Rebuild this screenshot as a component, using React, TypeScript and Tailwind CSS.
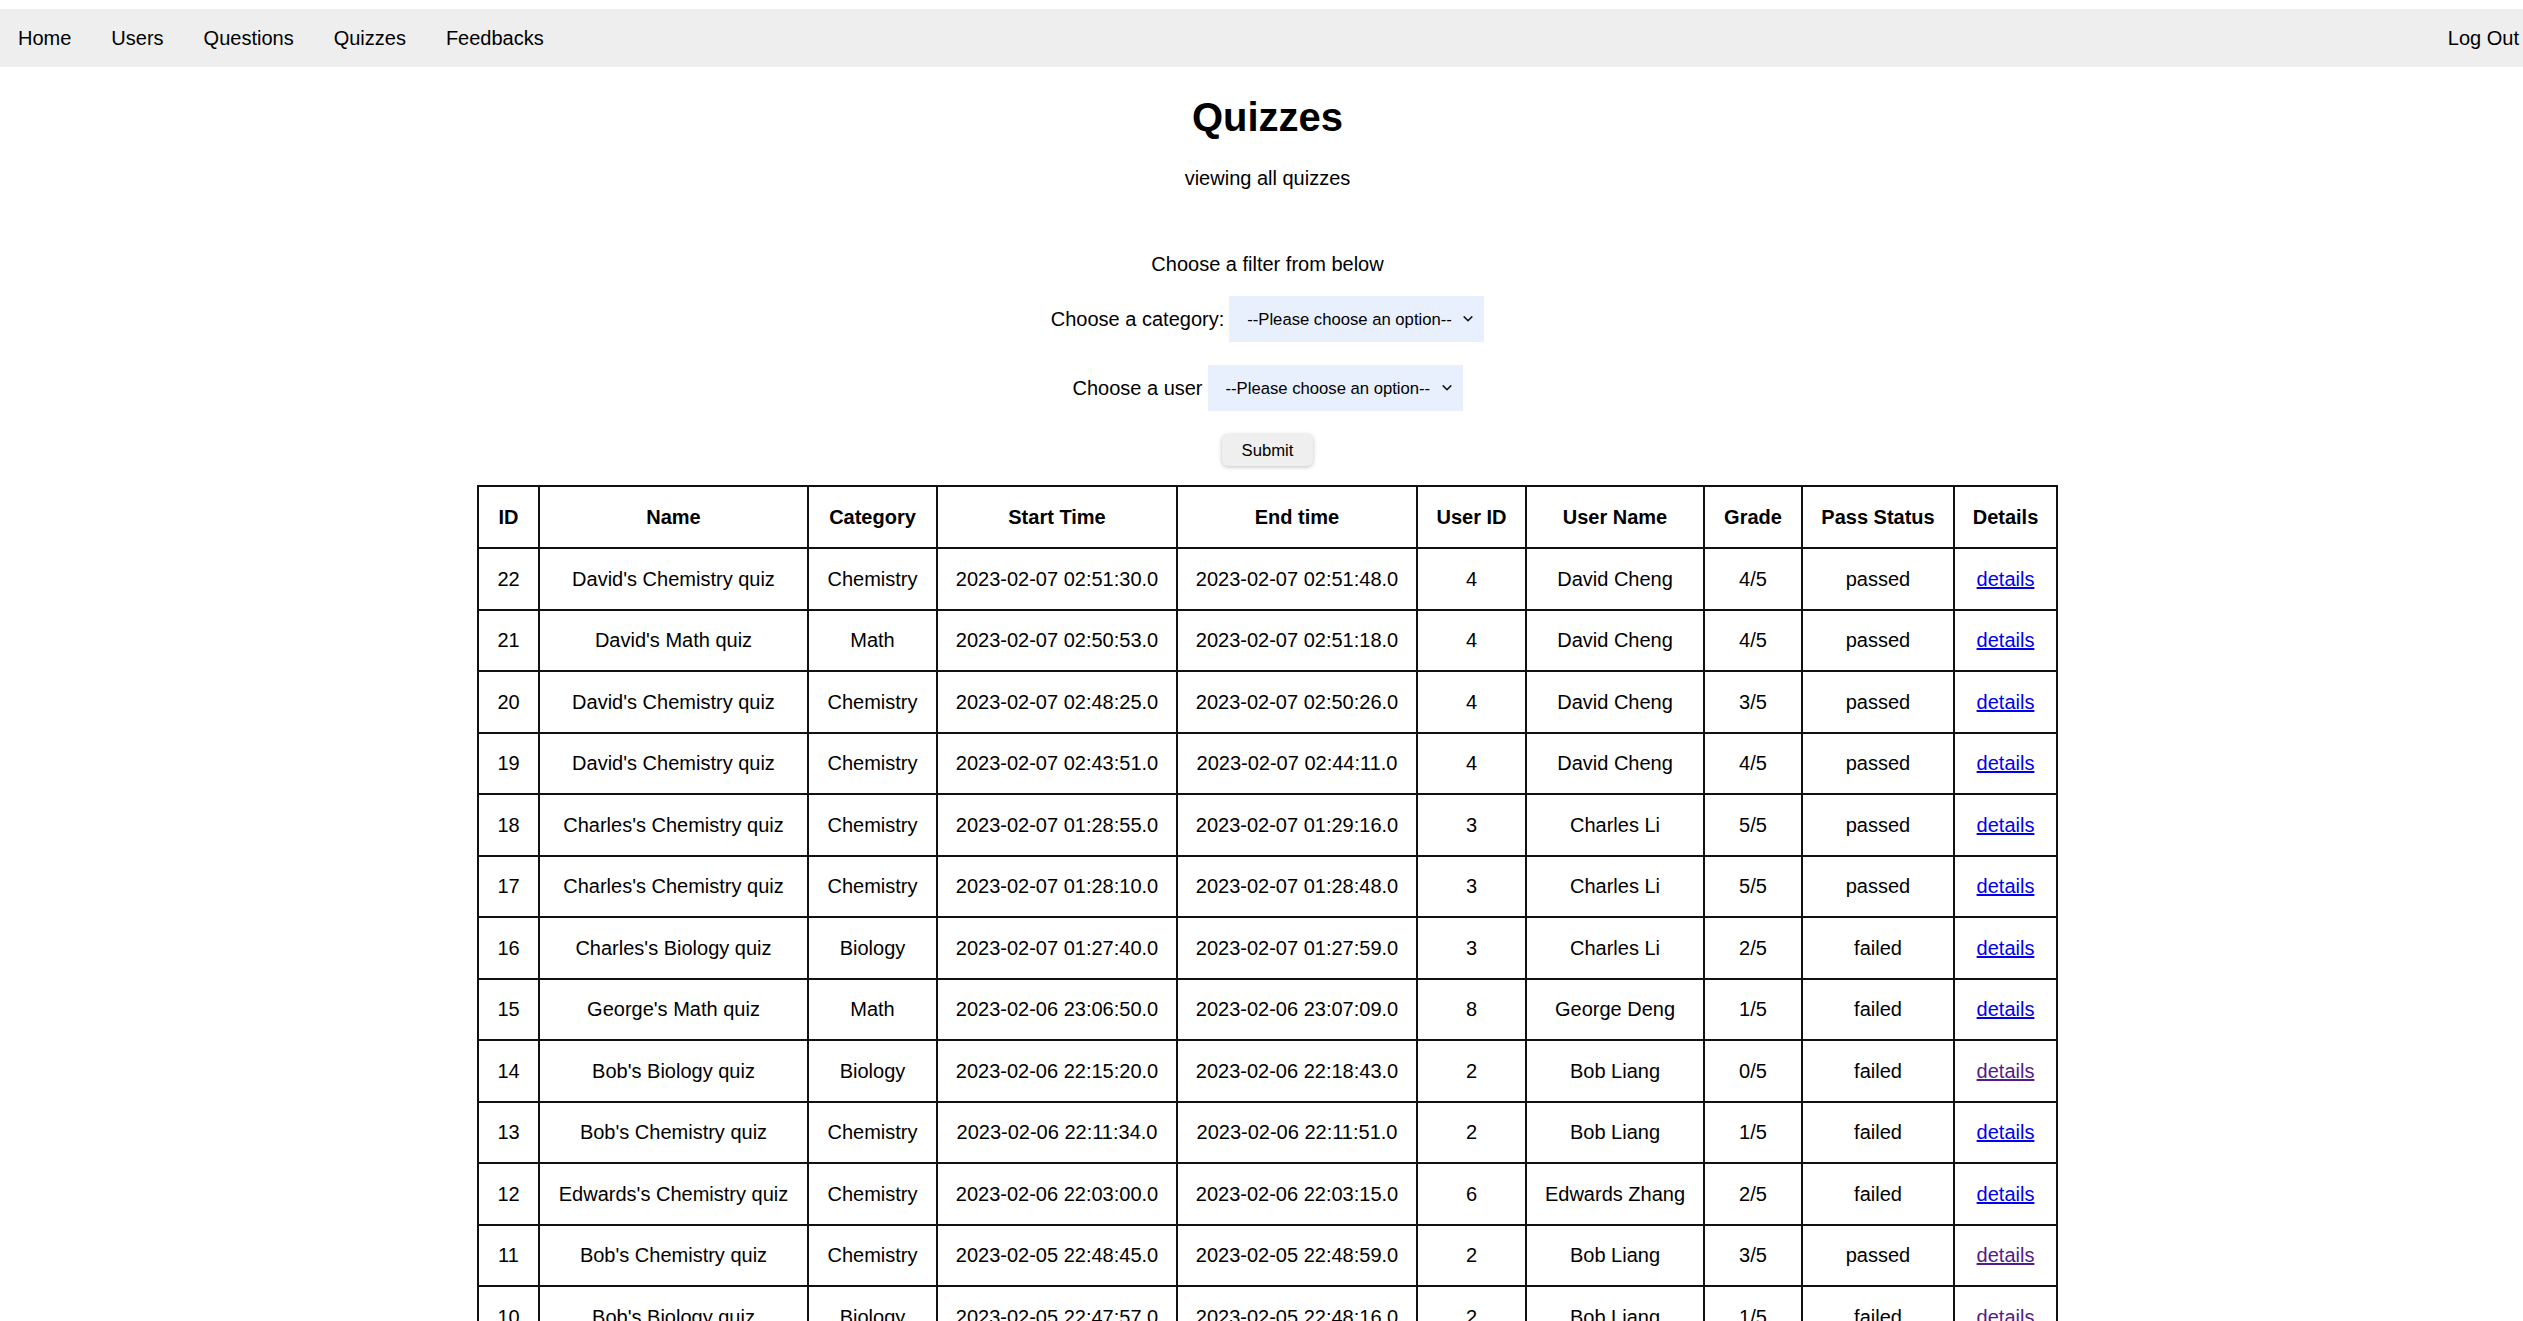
import React from "react";

type Row = {
  id: number;
  name: string;
  category: string;
  start: string;
  end: string;
  userId: number;
  userName: string;
  grade: string;
  status: string;
  visited: boolean;
};

const rows: Row[] = [
  { id: 22, name: "David's Chemistry quiz", category: "Chemistry", start: "2023-02-07 02:51:30.0", end: "2023-02-07 02:51:48.0", userId: 4, userName: "David Cheng", grade: "4/5", status: "passed", visited: false },
  { id: 21, name: "David's Math quiz", category: "Math", start: "2023-02-07 02:50:53.0", end: "2023-02-07 02:51:18.0", userId: 4, userName: "David Cheng", grade: "4/5", status: "passed", visited: false },
  { id: 20, name: "David's Chemistry quiz", category: "Chemistry", start: "2023-02-07 02:48:25.0", end: "2023-02-07 02:50:26.0", userId: 4, userName: "David Cheng", grade: "3/5", status: "passed", visited: false },
  { id: 19, name: "David's Chemistry quiz", category: "Chemistry", start: "2023-02-07 02:43:51.0", end: "2023-02-07 02:44:11.0", userId: 4, userName: "David Cheng", grade: "4/5", status: "passed", visited: false },
  { id: 18, name: "Charles's Chemistry quiz", category: "Chemistry", start: "2023-02-07 01:28:55.0", end: "2023-02-07 01:29:16.0", userId: 3, userName: "Charles Li", grade: "5/5", status: "passed", visited: false },
  { id: 17, name: "Charles's Chemistry quiz", category: "Chemistry", start: "2023-02-07 01:28:10.0", end: "2023-02-07 01:28:48.0", userId: 3, userName: "Charles Li", grade: "5/5", status: "passed", visited: false },
  { id: 16, name: "Charles's Biology quiz", category: "Biology", start: "2023-02-07 01:27:40.0", end: "2023-02-07 01:27:59.0", userId: 3, userName: "Charles Li", grade: "2/5", status: "failed", visited: false },
  { id: 15, name: "George's Math quiz", category: "Math", start: "2023-02-06 23:06:50.0", end: "2023-02-06 23:07:09.0", userId: 8, userName: "George Deng", grade: "1/5", status: "failed", visited: false },
  { id: 14, name: "Bob's Biology quiz", category: "Biology", start: "2023-02-06 22:15:20.0", end: "2023-02-06 22:18:43.0", userId: 2, userName: "Bob Liang", grade: "0/5", status: "failed", visited: true },
  { id: 13, name: "Bob's Chemistry quiz", category: "Chemistry", start: "2023-02-06 22:11:34.0", end: "2023-02-06 22:11:51.0", userId: 2, userName: "Bob Liang", grade: "1/5", status: "failed", visited: false },
  { id: 12, name: "Edwards's Chemistry quiz", category: "Chemistry", start: "2023-02-06 22:03:00.0", end: "2023-02-06 22:03:15.0", userId: 6, userName: "Edwards Zhang", grade: "2/5", status: "failed", visited: false },
  { id: 11, name: "Bob's Chemistry quiz", category: "Chemistry", start: "2023-02-05 22:48:45.0", end: "2023-02-05 22:48:59.0", userId: 2, userName: "Bob Liang", grade: "3/5", status: "passed", visited: true },
  { id: 10, name: "Bob's Biology quiz", category: "Biology", start: "2023-02-05 22:47:57.0", end: "2023-02-05 22:48:16.0", userId: 2, userName: "Bob Liang", grade: "1/5", status: "failed", visited: true },
];

function Chevron() {
  return (
    <svg
      className="pointer-events-none absolute right-[11px] top-1/2 -translate-y-1/2"
      width="10"
      height="7"
      viewBox="0 0 10 7"
      fill="none"
    >
      <path d="M1.2 1.4 L5 5.2 L8.8 1.4" stroke="#1a1a1a" strokeWidth="1.6" strokeLinecap="round" strokeLinejoin="round" />
    </svg>
  );
}

function Select({ name }: { name: string }) {
  return (
    <div className="relative">
      <select
        name={name}
        defaultValue=""
        className="appearance-none w-[255px] h-[46px] bg-[#e8f0fe] pl-[18px] pr-[30px] text-[16.67px] text-black outline-none border-0 rounded-none"
      >
        <option value="">--Please choose an option--</option>
        <option value="1">Option</option>
      </select>
      <Chevron />
    </div>
  );
}

const th = "border-2 border-[#111111] font-bold text-center align-middle px-0";
const td = "border-2 border-[#111111] text-center align-middle px-0";

export default function App() {
  return (
    <div className="h-[1321px] overflow-hidden bg-white text-black text-[20px] font-['Liberation_Sans',Arial,Helvetica,sans-serif]">
      <nav className="mt-[9px] h-[58px] bg-[#eeeeee] flex items-center justify-between pl-[18px] pr-[4px] leading-[23px]">
        <div className="flex gap-[40px]">
          <a href="#">Home</a>
          <a href="#">Users</a>
          <a href="#">Questions</a>
          <a href="#">Quizzes</a>
          <a href="#">Feedbacks</a>
        </div>
        <a href="#">Log Out</a>
      </nav>

      <main className="pl-[12px] flex flex-col items-center">
        <h1 className="mt-[27px] text-[40px] font-bold leading-[46px]">Quizzes</h1>
        <p className="mt-[26.5px] leading-[23px]">viewing all quizzes</p>
        <p className="mt-[63.5px] leading-[23px]">Choose a filter from below</p>

        <div className="mt-[20px] flex items-center gap-[5px]">
          <label className="leading-[23px]">Choose a category:</label>
          <Select name="category" />
        </div>
        <div className="mt-[23px] flex items-center gap-[5px]">
          <label className="leading-[23px]">Choose a user</label>
          <Select name="user" />
        </div>

        <button
          type="button"
          className="mt-[23px] w-[91px] h-[32px] rounded-[6px] bg-[#efefef] text-[16.67px] shadow-[0_1px_4px_rgba(0,0,0,0.25)]"
        >
          Submit
        </button>

        <table className="mt-[19px] border-collapse table-fixed w-[1579px]">
          <colgroup>
            <col className="w-[61px]" />
            <col className="w-[269px]" />
            <col className="w-[129px]" />
            <col className="w-[240px]" />
            <col className="w-[240px]" />
            <col className="w-[109px]" />
            <col className="w-[178px]" />
            <col className="w-[98px]" />
            <col className="w-[152px]" />
            <col className="w-[103px]" />
          </colgroup>
          <thead>
            <tr className="h-[62px]">
              <th className={th}>ID</th>
              <th className={th}>Name</th>
              <th className={th}>Category</th>
              <th className={th}>Start Time</th>
              <th className={th}>End time</th>
              <th className={th}>User ID</th>
              <th className={th}>User Name</th>
              <th className={th}>Grade</th>
              <th className={th}>Pass Status</th>
              <th className={th}>Details</th>
            </tr>
          </thead>
          <tbody>
            {rows.map((r) => (
              <tr key={r.id} className="h-[61.5px]">
                <td className={td}>{r.id}</td>
                <td className={td}>{r.name}</td>
                <td className={td}>{r.category}</td>
                <td className={td}>{r.start}</td>
                <td className={td}>{r.end}</td>
                <td className={td}>{r.userId}</td>
                <td className={td}>{r.userName}</td>
                <td className={td}>{r.grade}</td>
                <td className={td}>{r.status}</td>
                <td className={td}>
                  <a
                    href="#"
                    className={r.visited ? "underline text-[#551a8b]" : "underline text-[#0000ee]"}
                  >
                    details
                  </a>
                </td>
              </tr>
            ))}
          </tbody>
        </table>
      </main>
    </div>
  );
}
